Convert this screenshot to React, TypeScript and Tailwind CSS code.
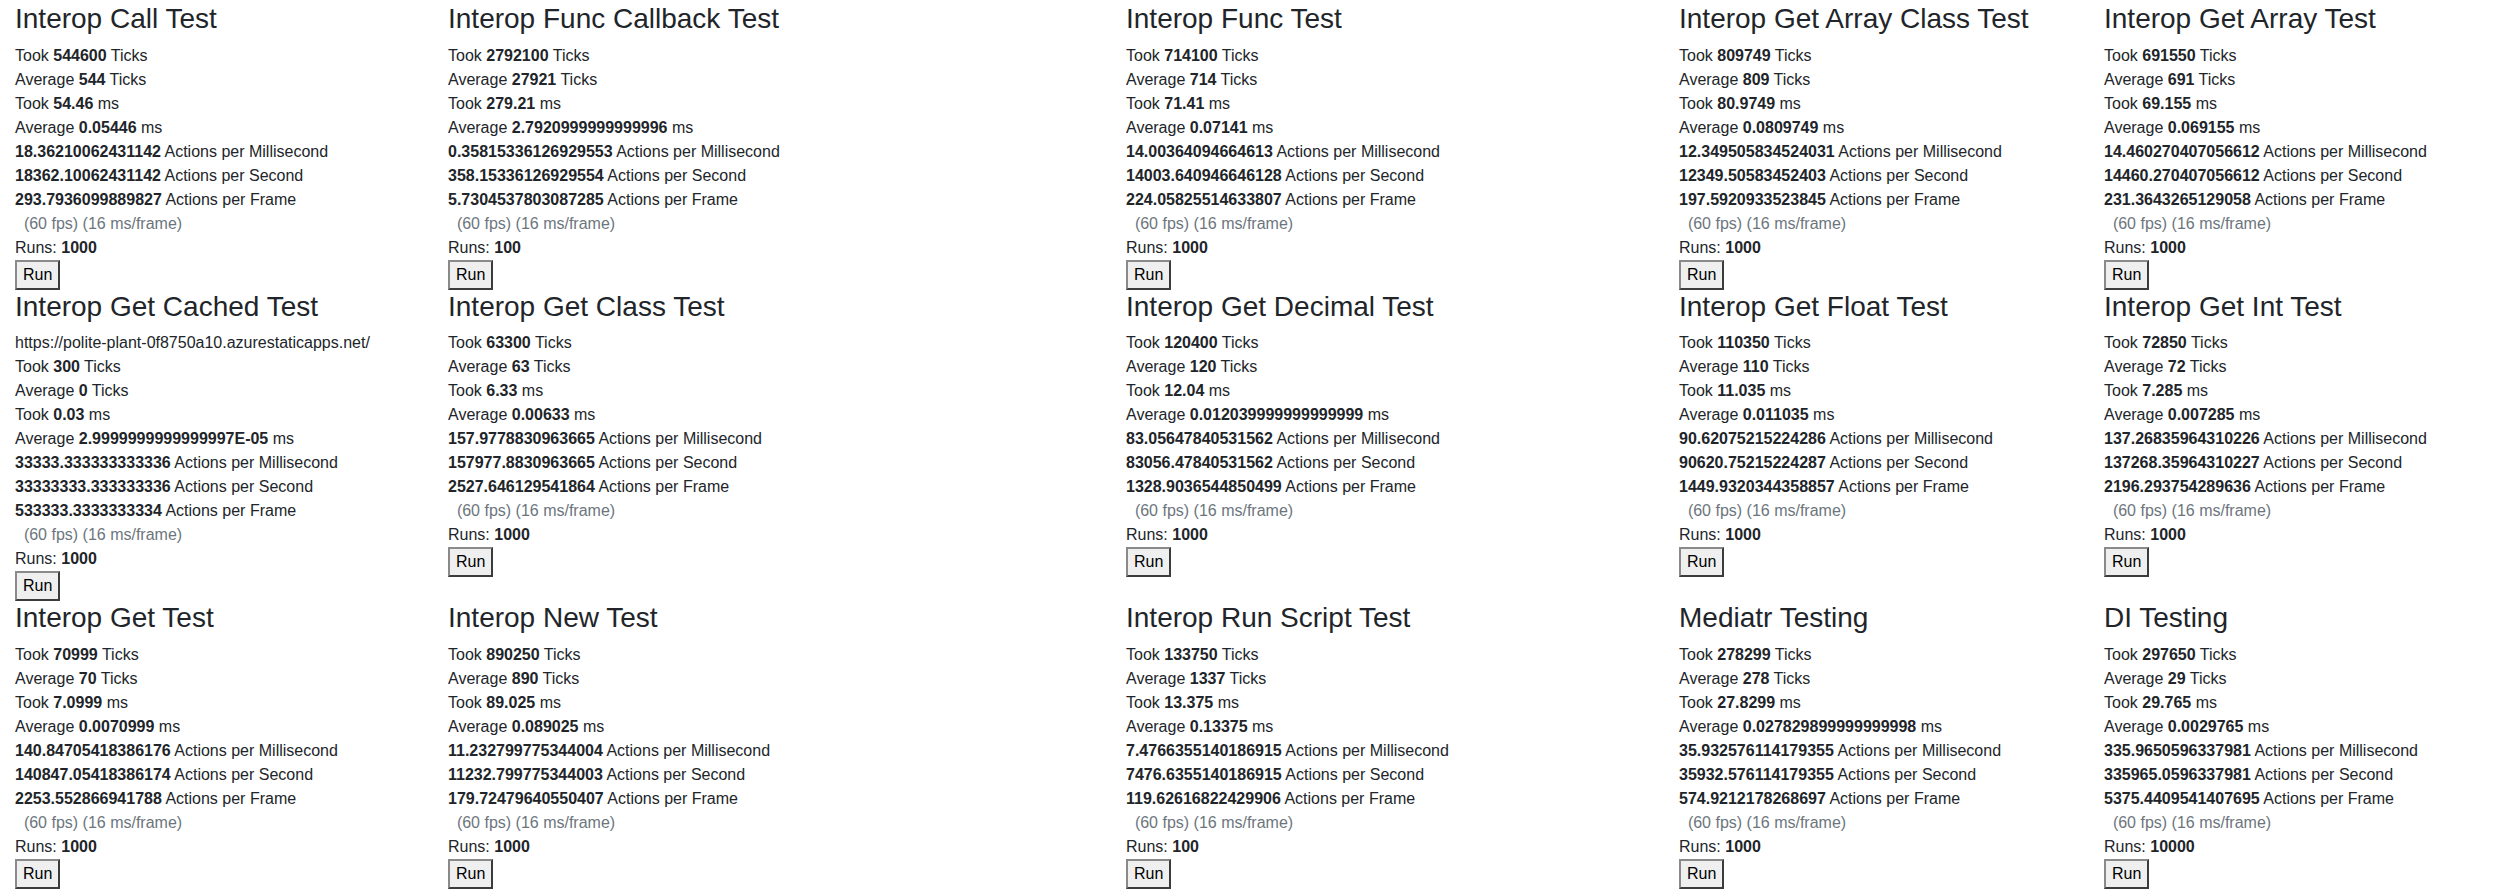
import React from 'react';

type TestResult = {
  name: string;
  url?: string;
  took: string;
  avgTicks: string;
  tookMs: string;
  avgMs: string;
  perMs: string;
  perSec: string;
  perFrame: string;
  runs: string;
};

const tests: TestResult[] = [
  // row 1
  { name: 'Interop Call Test', took: '544600', avgTicks: '544', tookMs: '54.46', avgMs: '0.05446', perMs: '18.36210062431142', perSec: '18362.10062431142', perFrame: '293.7936099889827', runs: '1000' },
  { name: 'Interop Func Callback Test', took: '2792100', avgTicks: '27921', tookMs: '279.21', avgMs: '2.7920999999999996', perMs: '0.35815336126929553', perSec: '358.15336126929554', perFrame: '5.7304537803087285', runs: '100' },
  { name: 'Interop Func Test', took: '714100', avgTicks: '714', tookMs: '71.41', avgMs: '0.07141', perMs: '14.00364094664613', perSec: '14003.640946646128', perFrame: '224.05825514633807', runs: '1000' },
  { name: 'Interop Get Array Class Test', took: '809749', avgTicks: '809', tookMs: '80.9749', avgMs: '0.0809749', perMs: '12.349505834524031', perSec: '12349.50583452403', perFrame: '197.5920933523845', runs: '1000' },
  { name: 'Interop Get Array Test', took: '691550', avgTicks: '691', tookMs: '69.155', avgMs: '0.069155', perMs: '14.460270407056612', perSec: '14460.270407056612', perFrame: '231.3643265129058', runs: '1000' },
  // row 2
  { name: 'Interop Get Cached Test', url: 'https://polite-plant-0f8750a10.azurestaticapps.net/', took: '300', avgTicks: '0', tookMs: '0.03', avgMs: '2.9999999999999997E-05', perMs: '33333.333333333336', perSec: '33333333.333333336', perFrame: '533333.3333333334', runs: '1000' },
  { name: 'Interop Get Class Test', took: '63300', avgTicks: '63', tookMs: '6.33', avgMs: '0.00633', perMs: '157.9778830963665', perSec: '157977.8830963665', perFrame: '2527.646129541864', runs: '1000' },
  { name: 'Interop Get Decimal Test', took: '120400', avgTicks: '120', tookMs: '12.04', avgMs: '0.012039999999999999', perMs: '83.05647840531562', perSec: '83056.47840531562', perFrame: '1328.9036544850499', runs: '1000' },
  { name: 'Interop Get Float Test', took: '110350', avgTicks: '110', tookMs: '11.035', avgMs: '0.011035', perMs: '90.62075215224286', perSec: '90620.75215224287', perFrame: '1449.9320344358857', runs: '1000' },
  { name: 'Interop Get Int Test', took: '72850', avgTicks: '72', tookMs: '7.285', avgMs: '0.007285', perMs: '137.26835964310226', perSec: '137268.35964310227', perFrame: '2196.293754289636', runs: '1000' },
  // row 3
  { name: 'Interop Get Test', took: '70999', avgTicks: '70', tookMs: '7.0999', avgMs: '0.0070999', perMs: '140.84705418386176', perSec: '140847.05418386174', perFrame: '2253.552866941788', runs: '1000' },
  { name: 'Interop New Test', took: '890250', avgTicks: '890', tookMs: '89.025', avgMs: '0.089025', perMs: '11.232799775344004', perSec: '11232.799775344003', perFrame: '179.72479640550407', runs: '1000' },
  { name: 'Interop Run Script Test', took: '133750', avgTicks: '1337', tookMs: '13.375', avgMs: '0.13375', perMs: '7.4766355140186915', perSec: '7476.6355140186915', perFrame: '119.62616822429906', runs: '100' },
  { name: 'Mediatr Testing', took: '278299', avgTicks: '278', tookMs: '27.8299', avgMs: '0.027829899999999998', perMs: '35.932576114179355', perSec: '35932.576114179355', perFrame: '574.9212178268697', runs: '1000' },
  { name: 'DI Testing', took: '297650', avgTicks: '29', tookMs: '29.765', avgMs: '0.0029765', perMs: '335.9650596337981', perSec: '335965.0596337981', perFrame: '5375.4409541407695', runs: '10000' },
];

function TestCard({ t }: { t: TestResult }) {
  return (
    <div className="whitespace-nowrap">
      <h3 className="mb-2 text-[28px] leading-[1.2] font-normal">{t.name}</h3>
      {t.url && <div>{t.url}</div>}
      <div>Took <b>{t.took}</b> Ticks</div>
      <div>Average <b>{t.avgTicks}</b> Ticks</div>
      <div>Took <b>{t.tookMs}</b> ms</div>
      <div>Average <b>{t.avgMs}</b> ms</div>
      <div><b>{t.perMs}</b> Actions per Millisecond</div>
      <div><b>{t.perSec}</b> Actions per Second</div>
      <div><b>{t.perFrame}</b> Actions per Frame</div>
      <div className="text-[#6c757d]">{'\u00a0\u00a0'}(60 fps) (16 ms/frame)</div>
      <div>Runs: <b>{t.runs}</b></div>
      <button
        type="button"
        className="border-2 border-t-[#8a8a8a] border-l-[#8a8a8a] border-r-[#3c3c3c] border-b-[#3c3c3c] bg-[#efefef] px-1.5 py-px text-black"
      >
        Run
      </button>
    </div>
  );
}

export default function App() {
  return (
    <div className="min-h-screen bg-white pt-[2px] pl-[15px] font-['Liberation_Sans',Arial,sans-serif] text-base leading-6 text-[#212529]">
      <div className="grid grid-cols-[433px_678px_553px_425px_1fr]">
        {tests.map((t) => (
          <TestCard key={t.name} t={t} />
        ))}
      </div>
    </div>
  );
}
